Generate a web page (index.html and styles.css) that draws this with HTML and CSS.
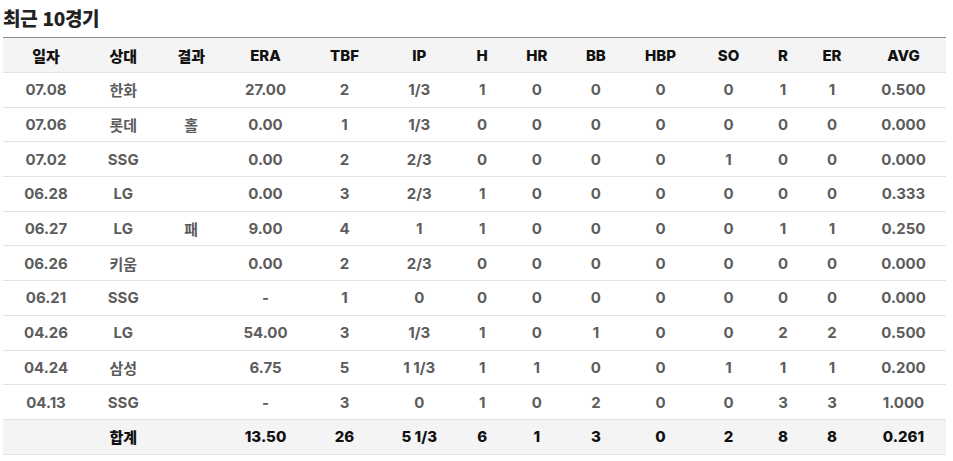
FILE: index.html
```html
<!DOCTYPE html>
<html lang="ko">
<head>
<meta charset="utf-8">
<link rel="stylesheet" href="styles.css">
</head>
<body>
<div class="wrap">
  <h2 class="title">최근 10경기</h2>
  <table class="stats">
    <colgroup>
      <col class="c1"><col class="c2"><col class="c3"><col class="c4"><col class="c5"><col class="c6"><col class="c7"><col class="c8"><col class="c9"><col class="c10"><col class="c11"><col class="c12"><col class="c13"><col class="c14">
    </colgroup>
    <thead>
      <tr><th>일자</th><th>상대</th><th>결과</th><th>ERA</th><th>TBF</th><th>IP</th><th>H</th><th>HR</th><th>BB</th><th>HBP</th><th>SO</th><th>R</th><th>ER</th><th>AVG</th></tr>
    </thead>
    <tbody>
      <tr><td>07.08</td><td>한화</td><td></td><td>27.00</td><td>2</td><td>1/3</td><td>1</td><td>0</td><td>0</td><td>0</td><td>0</td><td>1</td><td>1</td><td>0.500</td></tr>
      <tr><td>07.06</td><td>롯데</td><td>홀</td><td>0.00</td><td>1</td><td>1/3</td><td>0</td><td>0</td><td>0</td><td>0</td><td>0</td><td>0</td><td>0</td><td>0.000</td></tr>
      <tr><td>07.02</td><td>SSG</td><td></td><td>0.00</td><td>2</td><td>2/3</td><td>0</td><td>0</td><td>0</td><td>0</td><td>1</td><td>0</td><td>0</td><td>0.000</td></tr>
      <tr><td>06.28</td><td>LG</td><td></td><td>0.00</td><td>3</td><td>2/3</td><td>1</td><td>0</td><td>0</td><td>0</td><td>0</td><td>0</td><td>0</td><td>0.333</td></tr>
      <tr><td>06.27</td><td>LG</td><td>패</td><td>9.00</td><td>4</td><td>1</td><td>1</td><td>0</td><td>0</td><td>0</td><td>0</td><td>1</td><td>1</td><td>0.250</td></tr>
      <tr><td>06.26</td><td>키움</td><td></td><td>0.00</td><td>2</td><td>2/3</td><td>0</td><td>0</td><td>0</td><td>0</td><td>0</td><td>0</td><td>0</td><td>0.000</td></tr>
      <tr><td>06.21</td><td>SSG</td><td></td><td>-</td><td>1</td><td>0</td><td>0</td><td>0</td><td>0</td><td>0</td><td>0</td><td>0</td><td>0</td><td>0.000</td></tr>
      <tr><td>04.26</td><td>LG</td><td></td><td>54.00</td><td>3</td><td>1/3</td><td>1</td><td>0</td><td>1</td><td>0</td><td>0</td><td>2</td><td>2</td><td>0.500</td></tr>
      <tr><td>04.24</td><td>삼성</td><td></td><td>6.75</td><td>5</td><td>1 1/3</td><td>1</td><td>1</td><td>0</td><td>0</td><td>1</td><td>1</td><td>1</td><td>0.200</td></tr>
      <tr><td>04.13</td><td>SSG</td><td></td><td>-</td><td>3</td><td>0</td><td>1</td><td>0</td><td>2</td><td>0</td><td>0</td><td>3</td><td>3</td><td>1.000</td></tr>
    </tbody>
    <tfoot>
      <tr><td></td><td>합계</td><td></td><td>13.50</td><td>26</td><td>5 1/3</td><td>6</td><td>1</td><td>3</td><td>0</td><td>2</td><td>8</td><td>8</td><td>0.261</td></tr>
    </tfoot>
  </table>
</div>
</body>
</html>
```
FILE: styles.css
```css
html, body {
  margin: 0;
  padding: 0;
  background: #fff;
}
body {
  font-family: "Inter", "Noto Sans CJK KR", sans-serif;
}
.wrap {
  padding: 7px 7px 0 3px;
}
.title {
  margin: 0 0 9px 0;
  font-family: "Noto Sans CJK KR", sans-serif;
  font-size: 19px;
  font-weight: 900;
  line-height: 21px;
  color: #222;
  letter-spacing: -0.3px;
}
.stats {
  width: 943px;
  table-layout: fixed;
  border-collapse: collapse;
  border-top: 1px solid #8c8c8c;
}
.c1 { width: 86px; }
.c2 { width: 68.5px; }
.c3 { width: 67.5px; }
.c4 { width: 81px; }
.c5 { width: 77px; }
.c6 { width: 72.5px; }
.c7 { width: 53.25px; }
.c8 { width: 56px; }
.c9 { width: 62.25px; }
.c10 { width: 67px; }
.c11 { width: 69px; }
.c12 { width: 40px; }
.c13 { width: 58px; }
.c14 { width: 85px; }
.stats th, .stats td {
  text-align: center;
  padding: 0;
  font-size: 15px;
  font-weight: 700;
  border-bottom: 1px solid #e2e2e2;
}
.stats th {
  height: 34px;
  background: #f4f4f4;
  color: #111;
  font-weight: 800;
}
.stats td {
  height: 33.7px;
  color: #5c5c5c;
}
.stats tfoot td {
  background: #f4f4f4;
  color: #111;
  font-weight: 800;
}
```
